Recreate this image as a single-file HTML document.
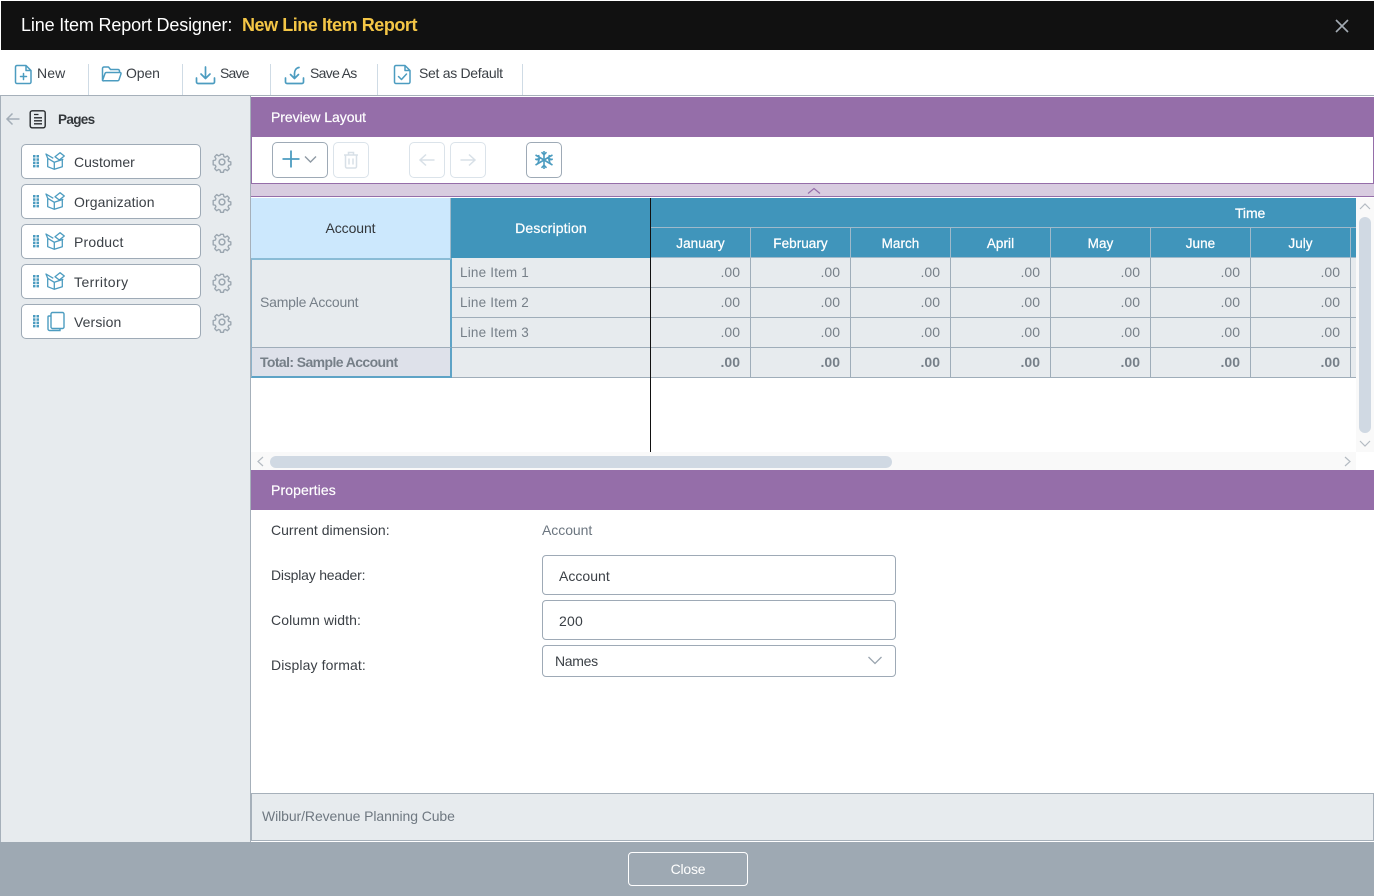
<!DOCTYPE html>
<html lang="en"><head><meta charset="utf-8"><title>Line Item Report Designer</title>
<style>
html,body{margin:0;padding:0;background:#fff}
#p{position:relative;width:1374px;height:896px;overflow:hidden;font-family:"Liberation Sans",sans-serif;font-size:14px;color:#3b4046;background:#fff}
#p div,#p span,#p svg{position:absolute;box-sizing:border-box}
.t{white-space:nowrap;line-height:20px;height:20px}
.sep{width:1px;background:#cfdbe5;top:64px;height:31px}
.bar{background:#956ea9;left:251px;width:1123px;height:40px}
.ic{fill:none;stroke:#4c9cc0;stroke-width:1.5;stroke-linecap:round;stroke-linejoin:round}
.box{left:21px;width:180px;height:35px;background:#fff;border:1px solid #9eaab6;border-radius:5px}
.btn{top:141px;height:37px;border:1px solid #dbe3ea;border-radius:5px;background:#fff}
.m{top:228px;width:100px;height:30px;line-height:31px;text-align:center;color:#fff;background:#4095bb;border-left:1px solid #9fb9ca;border-bottom:1px solid #9fb9ca;font-weight:400;-webkit-text-stroke:.25px #fff;font-size:13.5px;letter-spacing:.05px}
.c{width:100px;height:30px;line-height:29px;text-align:right;padding-right:10px;color:#767f88;background:#e7ebee;border-left:1px solid #9fadb9;border-bottom:1px solid #9fadb9;font-size:14px}
.b{font-weight:700}
.li{left:451px;width:200px;height:30px;line-height:29px;padding-left:9px;color:#767f88;background:#e7ebee;border-bottom:1px solid #9fadb9;font-size:13.5px;letter-spacing:.2px}
.in{left:542px;width:354px;background:#fff;border:1px solid #9eaab6;border-radius:4px}
</style></head><body><div id="p">

<div style="left:1px;top:1px;width:1373px;height:49px;background:#111"></div>
<span class="t" style="left:21px;top:15px;font-size:18px;color:#fff;letter-spacing:-.15px">Line Item Report Designer:</span>
<span class="t" style="left:242px;top:15px;font-size:18px;font-weight:700;color:#f4c646;letter-spacing:-.45px">New Line Item Report</span>
<svg style="left:1334px;top:18px" width="16" height="16"><path d="M2 2L14 14M14 2L2 14" stroke="#a3abb3" stroke-width="1.6" fill="none"/></svg>

<svg class="ic" style="left:14px;top:63px" width="20" height="22" viewBox="0 0 20 22"><path d="M3 2.500h9l5 5V19a1.500 1.500 0 0 1-1.500 1.500H3A1.500 1.500 0 0 1 1.500 19V4A1.500 1.500 0 0 1 3 2.500zM12 2.500V7.500h5M9.500 10.500v6M6.500 13.500h6"/></svg>
<span class="t" style="left:37px;top:63px;letter-spacing:.1px">New</span>
<div class="sep" style="left:88px"></div>
<svg class="ic" style="left:101px;top:65px" width="21" height="18" viewBox="0 0 21 18"><path d="M1.500 15V3.500A1.500 1.500 0 0 1 3 2h4.500l2 2.500H17a1.500 1.500 0 0 1 1.500 1.500V7M1.500 15.500L4 8.500a1.500 1.500 0 0 1 1.500-1H19a1 1 0 0 1 1 1.300l-2 6a1.500 1.500 0 0 1-1.500 1H3a1.500 1.500 0 0 1-1.500-.3z"/></svg>
<span class="t" style="left:126px;top:63px;letter-spacing:-.1px">Open</span>
<div class="sep" style="left:182px"></div>
<svg class="ic" style="left:195px;top:65px" width="21" height="20" viewBox="0 0 21 20"><path d="M10.500 2v11M6 9l4.500 4.500L15 9M1.500 13v4a1.500 1.500 0 0 0 1.500 1.500h15a1.500 1.500 0 0 0 1.500-1.500v-4" stroke-width="1.700"/></svg>
<span class="t" style="left:220px;top:63px;letter-spacing:-.8px">Save</span>
<div class="sep" style="left:270px"></div>
<svg class="ic" style="left:284px;top:65px" width="21" height="20" viewBox="0 0 21 20"><path d="M15 2.500c-3 .5-4.500 3-4.500 6V13M6.500 9.500l4 4 4-4M1.500 13v4a1.500 1.500 0 0 0 1.500 1.500h15a1.500 1.500 0 0 0 1.500-1.500v-4" stroke-width="1.700"/></svg>
<span class="t" style="left:310px;top:63px;letter-spacing:-.68px">Save As</span>
<div class="sep" style="left:377px"></div>
<svg class="ic" style="left:393px;top:63px" width="20" height="22" viewBox="0 0 20 22"><path d="M3 2.500h9l5 5V19a1.500 1.500 0 0 1-1.500 1.500H3A1.500 1.500 0 0 1 1.500 19V4A1.500 1.500 0 0 1 3 2.500zM12 2.500V7.500h5M5.500 13.500l3 3 5-5.500"/></svg>
<span class="t" style="left:419px;top:63px;letter-spacing:-.3px">Set as Default</span>
<div class="sep" style="left:522px"></div>
<div style="left:0;top:95px;width:1374px;height:1px;background:#a6b0ba"></div>

<div style="left:0;top:96px;width:251px;height:746px;background:#e7ebee;border-left:1px solid #a6b0ba;border-right:1px solid #a6b0ba"></div>
<svg style="left:5px;top:111px" width="16" height="16"><path d="M14.500 8H2M7.500 2.500L2 8l5.500 5.500" fill="none" stroke="#a3adb7" stroke-width="1.500"/></svg>
<svg style="left:29px;top:110px" width="18" height="19" viewBox="0 0 18 19"><rect x="1.200" y=".8" width="15" height="17" rx="2" fill="none" stroke="#26292c" stroke-width="1.400"/><path d="M5 4.500h4.500M5 7.800h8M5 10.800h8M5 13.800h8" stroke="#26292c" stroke-width="1.300"/></svg>
<span class="t" style="left:58px;top:110px;font-weight:700;font-size:13.500px;color:#33373b;letter-spacing:-.65px">Pages</span>

<div class="box" style="top:144px"></div><div class="box" style="top:184px"></div><div class="box" style="top:224px"></div><div class="box" style="top:264px"></div><div class="box" style="top:304px"></div>
<svg style="left:0;top:0" width="250" height="340">
<defs>
<g id="dots" fill="#4c9cc0"><rect x="0" y="0" width="2.500" height="2.500"/><rect x="3.500" y="0" width="2.500" height="2.500"/><rect x="0" y="3.300" width="2.500" height="2.500"/><rect x="3.500" y="3.300" width="2.500" height="2.500"/><rect x="0" y="6.600" width="2.500" height="2.500"/><rect x="3.500" y="6.600" width="2.500" height="2.500"/><rect x="0" y="9.900" width="2.500" height="2.500"/><rect x="3.500" y="9.900" width="2.500" height="2.500"/></g>
<g id="cube" fill="none" stroke="#4c9cc0" stroke-width="1.300" stroke-linejoin="round"><path d="M1.200 6.300L7.800 10.300 16.800 7.300M7.800 10.300V17.300M1.200 6.300V14.700L7.800 17.300 15.800 14.700V7.300"/><path d="M1.200 6.300L-.5 2 6.800 6.300M8.500 4.700L13.500 .7 17.800 4 12.800 8z"/></g>
<g id="gr" fill="none" stroke="#9ba6b0" stroke-width="1.500" stroke-linejoin="round"><circle cx="10" cy="10" r="2.900"/><path d="M8.400 1.500h3.200l.5 2.500 1.600.7 2.200-1.400 2.200 2.300-1.400 2.100.7 1.700 2.400.5v3.200l-2.400.5-.7 1.700 1.400 2.100-2.200 2.300-2.200-1.400-1.600.7-.5 2.500H8.400l-.5-2.500-1.600-.7-2.200 1.400-2.200-2.300 1.400-2.100-.7-1.700-2.400-.5V8.400l2.400-.5.7-1.700-1.400-2.100 2.200-2.300 2.200 1.400 1.600-.7z" transform="translate(1 1) scale(.9)"/></g>
</defs>
<use href="#dots" x="33" y="155"/><use href="#dots" x="33" y="195"/><use href="#dots" x="33" y="235"/><use href="#dots" x="33" y="275"/><use href="#dots" x="33" y="315"/>
<use href="#cube" x="46.500" y="152"/><use href="#cube" x="46.500" y="192"/><use href="#cube" x="46.500" y="232"/><use href="#cube" x="46.500" y="272"/>
<g fill="none" stroke="#4c9cc0" stroke-width="1.400"><rect x="51" y="312.500" width="13" height="16" rx="1.500"/><path d="M51 316h-2a1 1 0 0 0-1 1v12a1.500 1.500 0 0 0 1.500 1.500H60v-2M48 318v11"/></g>
<use href="#gr" x="212" y="152"/><use href="#gr" x="212" y="192"/><use href="#gr" x="212" y="232"/><use href="#gr" x="212" y="272"/><use href="#gr" x="212" y="312"/>
</svg>
<span class="t" style="left:74px;top:152px;letter-spacing:.02px">Customer</span>
<span class="t" style="left:74px;top:192px;letter-spacing:.1px">Organization</span>
<span class="t" style="left:74px;top:232px;letter-spacing:.18px">Product</span>
<span class="t" style="left:74px;top:272px;letter-spacing:.45px">Territory</span>
<span class="t" style="left:74px;top:312px;letter-spacing:.1px">Version</span>

<div class="bar" style="top:97px"></div>
<span class="t" style="left:271px;top:107px;color:#fff;font-size:14px;letter-spacing:-.05px;-webkit-text-stroke:.2px #fff">Preview Layout</span>
<div style="left:251px;top:137px;width:1123px;height:47px;background:#fff;border-right:1px solid #956ea9;border-bottom:1px solid #956ea9;border-left:1px solid #956ea9"></div>
<div class="btn" style="left:272px;top:142px;width:56px;height:36px;border-color:#9eaab6"></div>
<svg style="left:281px;top:149px" width="40" height="20"><path d="M10 1.500v17M1.500 10h17" stroke="#4c9cc0" stroke-width="1.800" fill="none"/><path d="M24 7.500l5.500 5.500L35 7.500" stroke="#8e99a4" stroke-width="1.400" fill="none"/></svg>
<div class="btn" style="left:333px;top:142px;width:36px;height:36px"></div>
<svg style="left:343px;top:151px" width="16" height="18" viewBox="0 0 16 18"><path d="M1 4h14M5.500 4V1.500h5V4M2.500 4v11.500a1.500 1.500 0 0 0 1.500 1.500h8a1.500 1.500 0 0 0 1.500-1.500V4M6 7.500v6M10 7.500v6" fill="none" stroke="#d8e0e7" stroke-width="1.500"/></svg>
<div class="btn" style="left:409px;top:142px;width:36px;height:36px"></div>
<svg style="left:418px;top:152px" width="18" height="16"><path d="M16.500 8H2M8 2.500L2 8l6 5.500" fill="none" stroke="#d8e0e7" stroke-width="1.500"/></svg>
<div class="btn" style="left:450px;top:142px;width:36px;height:36px"></div>
<svg style="left:459px;top:152px" width="18" height="16"><path d="M1.500 8H16M10 2.500L16 8l-6 5.500" fill="none" stroke="#d8e0e7" stroke-width="1.500"/></svg>
<div class="btn" style="left:526px;top:142px;width:36px;height:36px;border-color:#9eaab6"></div>
<svg style="left:534px;top:150px" width="20" height="20" viewBox="0 0 20 20"><g fill="none" stroke="#4c9cc0" stroke-width="1.600"><path d="M10 1v18M1.500 5l17 10M18.500 5l-17 10"/><path d="M7.500 2.200L10 4.700l2.500-2.500M7.500 17.800L10 15.300l2.500 2.500M1.200 9.200l3.800.8-1.200 3.600M18.800 9.200L15 10l1.200 3.600M1.800 9.800l3.600-1.300-.9-3.600M18.200 9.800l-3.600-1.300.9-3.600"/></g></svg>

<div style="left:251px;top:184px;width:1123px;height:13px;background:#d8cce0;border-bottom:1px solid #956ea9"></div>
<svg style="left:807px;top:187px" width="14" height="8"><path d="M1 6.500L7 1.500l6 5" fill="none" stroke="#956ea9" stroke-width="1.200"/></svg>

<div style="left:251px;top:198px;width:200px;height:60px;background:#cce8fd;border-right:1px solid #9fb9ca;line-height:60px;text-align:center;color:#33373b;font-size:14px;letter-spacing:-.1px">Account</div>
<div style="left:451px;top:198px;width:200px;height:60px;background:#4095bb;line-height:60px;text-align:center;color:#fff;font-size:14px;letter-spacing:.15px;-webkit-text-stroke:.25px #fff">Description</div>
<div style="left:651px;top:198px;width:705px;height:30px;background:#4095bb;border-bottom:1px solid #9fb9ca"></div>
<span class="t" style="left:1235px;top:203px;color:#fff;font-size:14px;letter-spacing:-.1px;-webkit-text-stroke:.25px #fff">Time</span>

<div class="li" style="top:258px">Line Item 1</div>
<div class="li" style="top:288px">Line Item 2</div>
<div class="li" style="top:318px">Line Item 3</div>
<div class="li" style="top:348px"></div>

<div style="left:251px;top:258px;width:201px;height:90px;background:#e7ebee;border-top:2px solid #8abcd6;border-left:1px solid #8db2c9;border-right:2px solid #5ea3c6;border-bottom:1px solid #9fadb9;line-height:85px;padding-left:8px;color:#767f88;font-size:14px;letter-spacing:-.2px">Sample Account</div>
<div style="left:251px;top:348px;width:201px;height:30px;background:#dee1ea;border-left:1px solid #8db2c9;border-bottom:2px solid #5ea3c6;border-right:2px solid #5ea3c6;line-height:28px;padding-left:8px;color:#767f88;font-size:14px;font-weight:700;letter-spacing:-.6px">Total: Sample Account</div>

<div id="g">
<div class="m" style="left:650px">January</div><div class="m" style="left:750px">February</div><div class="m" style="left:850px">March</div><div class="m" style="left:950px">April</div><div class="m" style="left:1050px">May</div><div class="m" style="left:1150px">June</div><div class="m" style="left:1250px">July</div><div class="m" style="left:1350px;width:6px"></div>

<div class="c" style="left:650px;top:258px">.00</div><div class="c" style="left:750px;top:258px">.00</div><div class="c" style="left:850px;top:258px">.00</div><div class="c" style="left:950px;top:258px">.00</div><div class="c" style="left:1050px;top:258px">.00</div><div class="c" style="left:1150px;top:258px">.00</div><div class="c" style="left:1250px;top:258px">.00</div><div class="c" style="left:1350px;top:258px;width:6px;padding:0"></div>
<div class="c" style="left:650px;top:288px">.00</div><div class="c" style="left:750px;top:288px">.00</div><div class="c" style="left:850px;top:288px">.00</div><div class="c" style="left:950px;top:288px">.00</div><div class="c" style="left:1050px;top:288px">.00</div><div class="c" style="left:1150px;top:288px">.00</div><div class="c" style="left:1250px;top:288px">.00</div><div class="c" style="left:1350px;top:288px;width:6px;padding:0"></div>
<div class="c" style="left:650px;top:318px">.00</div><div class="c" style="left:750px;top:318px">.00</div><div class="c" style="left:850px;top:318px">.00</div><div class="c" style="left:950px;top:318px">.00</div><div class="c" style="left:1050px;top:318px">.00</div><div class="c" style="left:1150px;top:318px">.00</div><div class="c" style="left:1250px;top:318px">.00</div><div class="c" style="left:1350px;top:318px;width:6px;padding:0"></div>
<div class="c b" style="left:650px;top:348px">.00</div><div class="c b" style="left:750px;top:348px">.00</div><div class="c b" style="left:850px;top:348px">.00</div><div class="c b" style="left:950px;top:348px">.00</div><div class="c b" style="left:1050px;top:348px">.00</div><div class="c b" style="left:1150px;top:348px">.00</div><div class="c b" style="left:1250px;top:348px">.00</div><div class="c" style="left:1350px;top:348px;width:6px;padding:0"></div>
</div>

<div style="left:650px;top:198px;width:1px;height:254px;background:#111"></div>

<div style="left:251px;top:452px;width:1105px;height:18px;background:#f9f9f9"></div>
<div style="left:270px;top:456px;width:622px;height:12px;background:#d0d9e3;border-radius:6px"></div>
<svg style="left:256px;top:456px" width="9" height="11"><path d="M7 1L2 5.500 7 10" fill="none" stroke="#b4bbc2" stroke-width="1.200"/></svg>
<svg style="left:1343px;top:456px" width="9" height="11"><path d="M2 1l5 4.500L2 10" fill="none" stroke="#b4bbc2" stroke-width="1.200"/></svg>
<div style="left:1356px;top:198px;width:18px;height:254px;background:#f9f9f9"></div>
<div style="left:1359px;top:217px;width:12px;height:216px;background:#d0d9e3;border-radius:6px"></div>
<svg style="left:1359px;top:202px" width="12" height="9"><path d="M1 7l5-5 5 5" fill="none" stroke="#b4bbc2" stroke-width="1.200"/></svg>
<svg style="left:1359px;top:439px" width="12" height="9"><path d="M1 2l5 5 5-5" fill="none" stroke="#b4bbc2" stroke-width="1.200"/></svg>

<div class="bar" style="top:470px"></div>
<span class="t" style="left:271px;top:480px;color:#fff;font-size:14px;letter-spacing:.1px;-webkit-text-stroke:.2px #fff">Properties</span>

<span class="t" style="left:271px;top:520px;letter-spacing:.02px">Current dimension:</span>
<span class="t" style="left:542px;top:520px;color:#6c7680;letter-spacing:-.05px">Account</span>
<span class="t" style="left:271px;top:565px;letter-spacing:-.2px">Display header:</span>
<span class="t" style="left:271px;top:610px;letter-spacing:.1px">Column width:</span>
<span class="t" style="left:271px;top:655px;letter-spacing:.1px">Display format:</span>
<div class="in" style="top:555px;height:40px"></div>
<span class="t" style="left:559px;top:566px;letter-spacing:.03px">Account</span>
<div class="in" style="top:600px;height:40px"></div>
<span class="t" style="left:559px;top:611px;letter-spacing:.2px">200</span>
<div class="in" style="top:645px;height:32px"></div>
<span class="t" style="left:555px;top:651px;letter-spacing:-.3px">Names</span>
<svg style="left:867px;top:655px" width="16" height="11"><path d="M1.500 2l6.500 6.500L14.500 2" fill="none" stroke="#9aa5af" stroke-width="1.300"/></svg>

<div style="left:251px;top:793px;width:1123px;height:48px;background:#e7ebee;border:1px solid #a6b0ba"></div>
<span class="t" style="left:262px;top:806px;color:#6f7881;letter-spacing:-.09px">Wilbur/Revenue Planning Cube</span>

<div style="left:0;top:842px;width:1374px;height:54px;background:#9ea9b3"></div>
<div style="left:628px;top:852px;width:120px;height:34px;border:1px solid #fff;border-radius:4px;line-height:32px;text-align:center;color:#fff;letter-spacing:-.2px">Close</div>

</div></body></html>
